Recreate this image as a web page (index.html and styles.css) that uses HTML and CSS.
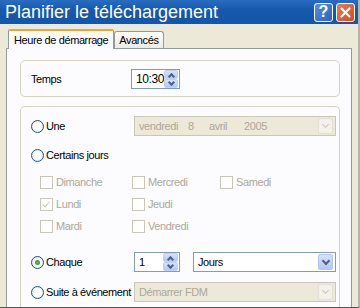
FILE: index.html
```html
<!DOCTYPE html>
<html lang="fr">

<head>
    <meta charset="UTF-8">
    <title>Planifier le téléchargement</title>
    <link rel="stylesheet" href="styles.css">
</head>

<body>
    <div class="window">
        <div class="titlebar">
            <span class="title">Planifier le téléchargement</span>
            <span class="tb-btn tb-help">?</span>
            <span class="tb-btn tb-close">
                <svg width="11" height="11" viewBox="0 0 11 11"><path d="M1.5 1.5l8 8M9.5 1.5l-8 8" stroke="#fff" stroke-width="2.2" stroke-linecap="round"/></svg>
            </span>
        </div>
        <div class="body">
            <div class="tabs">
                <div class="tab active">Heure de démarrage</div>
                <div class="tab">Avancés</div>
            </div>
            <div class="pane">
                <div class="group group-time">
                    <span class="lbl">Temps</span>
                    <div class="spin spin-time">
                        <span class="spin-val">10:30</span>
                        <span class="spin-btns"><span class="sb up"></span><span class="sb down"></span></span>
                    </div>
                </div>

                <div class="group group-when">
                    <div class="row r-une">
                        <span class="radio"></span><span class="rlabel">Une</span>
                        <div class="combo combo-date disabled">
                            <span class="d1">vendredi</span><span class="d2">8</span><span class="d3">avril</span><span class="d4">2005</span>
                            <span class="drop"></span>
                        </div>
                    </div>
                    <div class="row r-days">
                        <span class="radio"></span><span class="rlabel">Certains jours</span>
                    </div>
                    <div class="days">
                        <span class="chk"><span class="box"></span>Dimanche</span>
                        <span class="chk"><span class="box"></span>Mercredi</span>
                        <span class="chk"><span class="box"></span>Samedi</span>
                        <span class="chk"><span class="box checked"></span>Lundi</span>
                        <span class="chk"><span class="box"></span>Jeudi</span>
                        <span></span>
                        <span class="chk"><span class="box"></span>Mardi</span>
                        <span class="chk"><span class="box"></span>Vendredi</span>
                    </div>
                    <div class="row r-every">
                        <span class="radio on"></span><span class="rlabel">Chaque</span>
                        <div class="spin spin-num">
                            <span class="spin-val">1</span>
                            <span class="spin-btns"><span class="sb up"></span><span class="sb down"></span></span>
                        </div>
                        <div class="combo combo-unit">
                            <span>Jours</span>
                            <span class="drop"></span>
                        </div>
                    </div>
                    <div class="row r-event">
                        <span class="radio"></span><span class="rlabel">Suite à événement</span>
                        <div class="combo combo-event disabled">
                            <span>Démarrer FDM</span>
                            <span class="drop"></span>
                        </div>
                    </div>
                </div>
            </div>
        </div>
    </div>
</body>

</html>
```

FILE: styles.css
```css
html, body {
    margin: 0;
    padding: 0;
}

body {
    width: 360px;
    height: 308px;
    overflow: hidden;
    font-family: "Liberation Sans", Arial, sans-serif;
    font-size: 11px;
    letter-spacing: -0.4px;
    color: #000;
    background-color: #ece9d8;
}

.window {
    height: 308px;
    overflow: hidden;
    background-color: #ece9d8;
    border-right: 2px solid #b8b4a4;
    border-bottom: 1px solid #555;
    box-sizing: border-box;
}

.titlebar {
    height: 24px;
    display: flex;
    align-items: center;
    background: linear-gradient(#2a6cc0, #1559ad 40%, #1456a8);
    color: #fff;
    padding-left: 5px;
}

.title {
    flex: 1;
    font-size: 18px;
    letter-spacing: 0;
    line-height: 24px;
}

.tb-btn {
    width: 17px;
    height: 17px;
    border: 1px solid #fff;
    border-radius: 3px;
    display: flex;
    align-items: center;
    justify-content: center;
    box-sizing: content-box;
}

.tb-help {
    background: linear-gradient(135deg, #5c8fd8, #2a62c0);
    font-size: 16px;
    font-weight: bold;
    letter-spacing: 0;
    margin-right: 3px;
}

.tb-close {
    background: linear-gradient(135deg, #ec7a52, #d64a24);
    margin-right: 3px;
}

.body {
    padding: 5px 6px 0 6px;
}

.tabs {
    display: flex;
    align-items: flex-end;
    padding-left: 2px;
    height: 19px;
}

.tab {
    height: 16px;
    line-height: 16px;
    padding: 0 4px;
    border: 1px solid #919b9c;
    border-bottom: none;
    border-radius: 3px 3px 0 0;
    background: linear-gradient(#fdfdfb, #ecebe5);
}

.tab.active {
    height: 18px;
    line-height: 19px;
    padding: 0 5px;
    background: #fcfcfe;
    border-top: 2px solid #f0a438;
    border-radius: 2px 2px 0 0;
    position: relative;
    top: 1px;
}

.pane {
    height: 260px;
    box-sizing: border-box;
    overflow: hidden;
    background-color: #fcfcfe;
    border: 1px solid #919b9c;
    border-bottom: none;
    padding: 11px 11px 0 13px;
}

.group {
    border: 1px solid #d5d2c2;
    border-radius: 5px;
}

.group-time {
    height: 35px;
    display: flex;
    align-items: center;
    padding-left: 10px;
}

.lbl {
    width: 100px;
}

.group-when {
    margin-top: 9px;
    padding: 9px 0 20px 10px;
    border-bottom: none;
    border-radius: 5px 5px 0 0;
}

.row {
    height: 20px;
    display: flex;
    align-items: center;
}

.r-days { margin-top: 9px; }
.r-every { margin-top: 16px; }
.r-event { margin-top: 10px; }

.radio {
    width: 11px;
    height: 11px;
    border: 1px solid #1c5180;
    border-radius: 50%;
    background: radial-gradient(#ffffff 40%, #dcdad2);
    flex: none;
    position: relative;
}

.radio.on::after {
    content: "";
    position: absolute;
    left: 3px;
    top: 3px;
    width: 5px;
    height: 5px;
    border-radius: 50%;
    background: radial-gradient(#6cc060, #2a7a20);
}

.rlabel {
    width: 88px;
    padding-left: 2px;
    white-space: nowrap;
    flex: none;
}

.combo {
    height: 18px;
    border: 1px solid #7f9db9;
    background: #fff;
    display: flex;
    align-items: center;
    padding-left: 4px;
    position: relative;
    box-sizing: content-box;
}

.combo.disabled {
    background: #ece9d8;
    border-color: #c9c7ba;
    color: #aca899;
}

.combo-date,
.combo-event {
    width: 196px;
}

.combo-date span { flex: none; }
.d1 { width: 49px; }
.d2 { width: 21px; }
.d3 { width: 35px; }

.drop {
    position: absolute;
    right: 2px;
    top: 1px;
    width: 15px;
    height: 16px;
    border-radius: 2px;
    background: linear-gradient(#d6e2fb, #b3c8f5);
    border: 1px solid #b4c6f0;
    box-sizing: border-box;
}

.drop::after {
    content: "";
    position: absolute;
    left: 4px;
    top: 3px;
    width: 4px;
    height: 4px;
    border-right: 2px solid #4d6185;
    border-bottom: 2px solid #4d6185;
    transform: rotate(45deg);
}

.combo.disabled .drop {
    background: #f2f1ea;
    border-color: #e2e0d6;
}

.combo.disabled .drop::after {
    border-color: #c9c7ba;
    border-width: 1px;
}

.spin {
    height: 18px;
    border: 1px solid #7f9db9;
    background: #fff;
    display: flex;
    align-items: center;
    padding-left: 4px;
    box-sizing: content-box;
}

.spin-time {
    width: 43px;
    font-size: 12px;
}

.spin-num {
    width: 40px;
}

.spin-val {
    flex: 1;
}

.spin-btns {
    width: 15px;
    height: 18px;
    display: flex;
    flex-direction: column;
    margin-right: 1px;
}

.sb {
    flex: 1;
    background: linear-gradient(#d6e2fb, #b3c8f5);
    border: 1px solid #c0d0f4;
    border-radius: 2px;
    position: relative;
}

.sb::after {
    content: "";
    position: absolute;
    left: 4px;
    width: 3px;
    height: 3px;
    border-left: 2px solid #4d6185;
    border-top: 2px solid #4d6185;
}

.sb.up::after {
    top: 3px;
    transform: rotate(45deg);
}

.sb.down::after {
    top: 0;
    transform: rotate(225deg);
}

.combo-unit {
    width: 137px;
    margin-left: 13px;
}

.days {
    display: grid;
    grid-template-columns: 92px 88px auto;
    grid-auto-rows: 20px;
    row-gap: 2px;
    margin-top: 7px;
    padding-left: 9px;
    color: #aca899;
}

.chk {
    display: flex;
    align-items: center;
}

.box {
    width: 11px;
    height: 11px;
    border: 1px solid #c9c7ba;
    background: #fff;
    margin-right: 3px;
    position: relative;
}

.box.checked::after {
    content: "";
    position: absolute;
    left: 3px;
    top: 1px;
    width: 3px;
    height: 6px;
    border-right: 1px solid #c9c7ba;
    border-bottom: 1px solid #c9c7ba;
    transform: rotate(40deg);
}
```
